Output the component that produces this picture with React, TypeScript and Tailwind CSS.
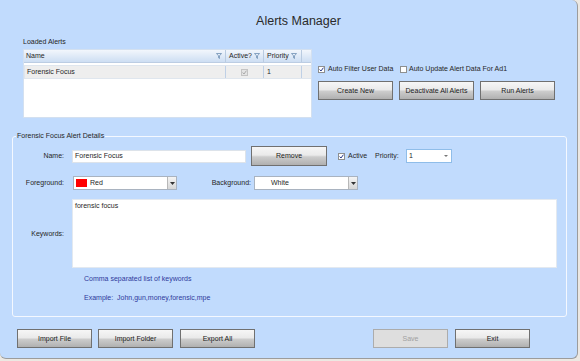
import React from 'react';
import clsx from 'clsx';

const Check: React.FC<{ checked?: boolean; disabled?: boolean }> = ({ checked, disabled }) => (
  <span
    className={clsx(
      'flex h-[7px] w-[7px] shrink-0 items-center justify-center border',
      disabled ? 'border-[#c4c4c4] bg-[#e4e4e4]' : 'border-[#8e8f8f] bg-white'
    )}>
    {checked && (
      <svg width="5" height="5" viewBox="0 0 5 5">
        <path
          d="M0.6 2.5 L2 4 L4.4 0.7"
          fill="none"
          stroke={disabled ? '#a9a9a9' : '#2a3b8a'}
          strokeWidth="1"
        />
      </svg>
    )}
  </span>
);

const Button: React.FC<{ label: string; disabled?: boolean; className?: string }> = ({
  label,
  disabled,
  className,
}) => (
  <div
    className={clsx(
      'flex h-[19px] w-[75px] shrink-0 items-center justify-center border text-[7px]',
      disabled
        ? 'border-[#acacac] bg-[#dedede] text-[#a0a0a0]'
        : 'border-[#707070] bg-[linear-gradient(#f6f6f6_0%,#eaeaea_45%,#cccccc_55%,#b0b0b0_100%)] text-[#1a1a1a]',
      className
    )}>
    {label}
  </div>
);

const Funnel = () => (
  <svg width="6" height="6" viewBox="0 0 6 6">
    <path d="M0.5 0.5 H5.5 L3.5 2.8 V5.5 L2.5 4.8 V2.8 Z" fill="none" stroke="#6f8fb4" strokeWidth="0.8" />
  </svg>
);

const Combo: React.FC<{ swatch: string; label: string }> = ({ swatch, label }) => (
  <div className="flex h-[14px] w-[104px] items-center border border-[#a9b3c0] bg-white">
    <span className={clsx('ml-[2px] h-[8px] w-[11px]', swatch)} />
    <span className="ml-[3px] flex-grow">{label}</span>
    <span className="flex h-full w-[9px] items-center justify-center border-l border-[#b8b8b8] bg-[linear-gradient(#f4f4f4,#d6d6d6)]">
      <svg width="5" height="3" viewBox="0 0 5 3">
        <path d="M0 0 H5 L2.5 3 Z" fill="#333" />
      </svg>
    </span>
  </div>
);

const App: React.FC = () => {
  return (
    <div className="h-[361px] w-[580px] bg-[#ece8e2] font-['Liberation_Sans',Arial,sans-serif] text-[7px] leading-[10px] text-[#262626]">
      <div className="flex h-[359px] w-[578px] flex-col rounded-tr-[6px] rounded-br-[6px] rounded-bl-[6px] border-r border-b border-[#9c9c9c] bg-[#c1dbfd]">
        {/* title */}
        <div className="mt-[13px] h-[16px] pl-[20px] text-center text-[12.5px] leading-[16px] text-[#2a2a2a]">
          Alerts Manager
        </div>

        {/* loaded alerts */}
        <div className="mt-[8px] flex pl-[23px]">
          <div className="w-[289px]">
            <div className="h-[10px]">Loaded Alerts</div>
            <div className="mt-[2px] flex h-[69px] flex-col border border-[#d3e0f0] bg-white">
              <div className="flex h-[13px] border-b border-[#bccde3] bg-[linear-gradient(#f2f6fc,#cddef3)]">
                <div className="flex w-[202px] items-center justify-between border-r border-[#b9cbe1] pr-[3px] pl-[2px]">
                  <span>Name</span>
                  <Funnel />
                </div>
                <div className="flex w-[38px] items-center justify-between border-r border-[#b9cbe1] pr-[3px] pl-[3px]">
                  <span>Active?</span>
                  <Funnel />
                </div>
                <div className="flex w-[38px] items-center justify-between border-r border-[#b9cbe1] pr-[4px] pl-[3px]">
                  <span>Priority</span>
                  <Funnel />
                </div>
                <div className="flex-grow" />
              </div>
              <div className="mt-[2px] flex h-[14px] border-y border-l border-[#dfe6ee] bg-[#eeeeee]">
                <div className="flex w-[201px] items-center border-r border-[#bfd0e6] pl-[2px]">
                  Forensic Focus
                </div>
                <div className="flex w-[38px] items-center justify-center border-r border-[#bfd0e6]">
                  <Check checked disabled />
                </div>
                <div className="flex w-[38px] items-center border-r border-[#bfd0e6] pl-[3px]">1</div>
                <div className="flex-grow" />
              </div>
            </div>
          </div>

          <div className="ml-[6px] pt-[27px]">
            <div className="flex h-[10px] items-center">
              <Check checked />
              <span className="ml-[3px] w-[72px]">Auto Filter User Data</span>
              <Check />
              <span className="ml-[2px]">Auto Update Alert Data For Ad1</span>
            </div>
            <div className="mt-[7px] flex gap-[6px]">
              <Button label="Create New" />
              <Button label="Deactivate All Alerts" />
              <Button label="Run Alerts" />
            </div>
          </div>
        </div>

        {/* details group */}
        <fieldset className="mt-[13px] ml-[12px] h-[186px] w-[555px] rounded-[3px] border border-[#f4f8ff]">
          <legend className="ml-[3px] h-[10px] px-px leading-[10px]">Forensic Focus Alert Details</legend>

          <div className="mt-[5px] flex h-[20px] items-center">
            <span className="w-[51px] text-right">Name:</span>
            <div className="ml-[8px] flex h-[13px] w-[174px] items-center border border-[#dde3ea] bg-white pl-[2px]">
              Forensic Focus
            </div>
            <Button label="Remove" className="ml-[5px] h-[20px] w-[76px]" />
            <span className="ml-[11px]">
              <Check checked />
            </span>
            <span className="ml-[3px] w-[27px]">Active</span>
            <span className="w-[31px]">Priority:</span>
            <div className="flex h-[14px] w-[46px] items-center justify-between border border-[#8fbde9] bg-white pr-[3px] pl-[2px]">
              <span>1</span>
              <svg width="4" height="2" viewBox="0 0 4 2">
                <path d="M0 0 H4 L2 2 Z" fill="#777" />
              </svg>
            </div>
          </div>

          <div className="mt-[10px] flex h-[14px] items-center">
            <span className="w-[51px] text-right">Foreground:</span>
            <div className="ml-[9px]">
              <Combo swatch="bg-[#ff0000]" label="Red" />
            </div>
            <span className="w-[74px] text-right">Background:</span>
            <div className="ml-[3px]">
              <Combo swatch="bg-white" label="White" />
            </div>
          </div>

          <div className="mt-[9px] flex h-[69px] items-center">
            <span className="w-[51px] text-right">Keywords:</span>
            <div className="ml-[8px] h-full w-[485px] border border-[#e3e9f0] bg-white pt-px pl-[2px]">
              forensic focus
            </div>
          </div>

          <div className="mt-[6px] h-[10px] pl-[71px] text-[#2e3a9c]">Comma separated list of keywords</div>
          <div className="mt-[9px] h-[10px] pl-[71px] whitespace-pre text-[#2e3a9c]">
            Example:  John,gun,money,forensic,mpe
          </div>
        </fieldset>

        {/* bottom buttons */}
        <div className="mt-[12px] flex pl-[17px]">
          <Button label="Import File" />
          <Button label="Import Folder" className="ml-[6px]" />
          <Button label="Export All" className="ml-[7px]" />
          <Button label="Save" disabled className="ml-[118px] w-[74px]" />
          <Button label="Exit" className="ml-[7px]" />
        </div>
      </div>
    </div>
  );
};

export default App;
